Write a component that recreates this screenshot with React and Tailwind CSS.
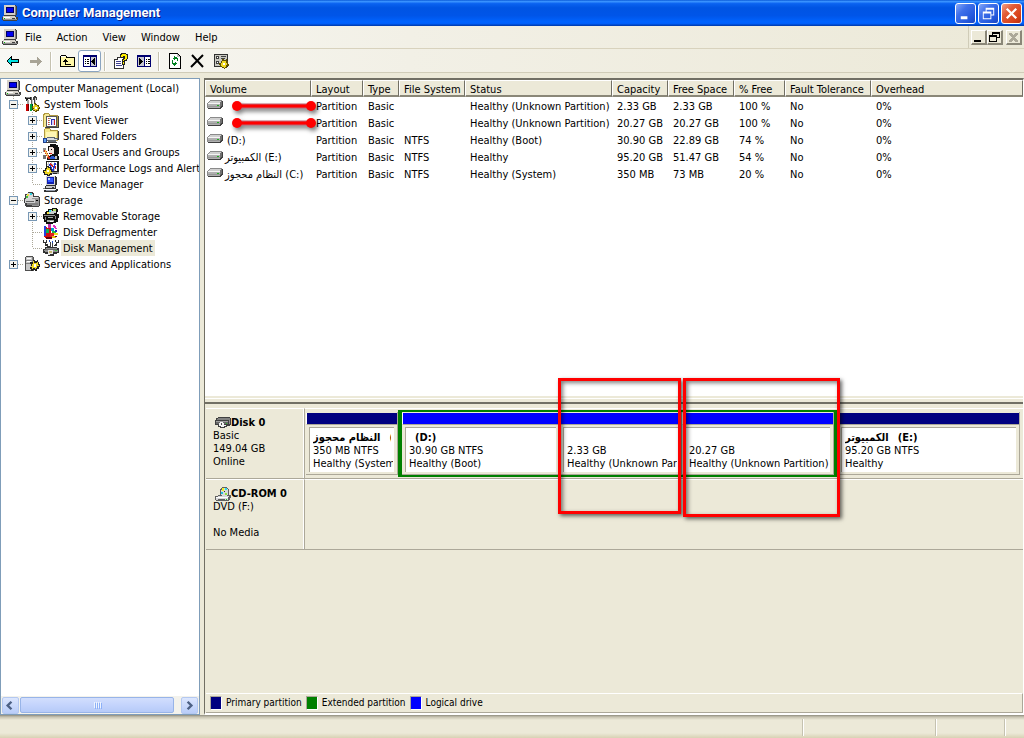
import { clsx } from "clsx";

const volumes = [
  { name: "", layout: "Partition", type: "Basic", fs: "", status: "Healthy (Unknown Partition)", capacity: "2.33 GB", free: "2.33 GB", pct: "100 %", marked: true },
  { name: "", layout: "Partition", type: "Basic", fs: "", status: "Healthy (Unknown Partition)", capacity: "20.27 GB", free: "20.27 GB", pct: "100 %", marked: true },
  { name: "", letter: "(D:)", layout: "Partition", type: "Basic", fs: "NTFS", status: "Healthy (Boot)", capacity: "30.90 GB", free: "22.89 GB", pct: "74 %" },
  { name: "الكمبيوتر", letter: "(E:)", layout: "Partition", type: "Basic", fs: "NTFS", status: "Healthy", capacity: "95.20 GB", free: "51.47 GB", pct: "54 %" },
  { name: "النظام محجوز", letter: "(C:)", layout: "Partition", type: "Basic", fs: "NTFS", status: "Healthy (System)", capacity: "350 MB", free: "73 MB", pct: "20 %" },
];

const columns = ["Volume", "Layout", "Type", "File System", "Status", "Capacity", "Free Space", "% Free", "Fault Tolerance", "Overhead"];

const tree = [
  { label: "Computer Management (Local)", depth: 0, icon: ComputerIcon },
  { label: "System Tools", depth: 1, box: "-", icon: ToolsIcon },
  { label: "Event Viewer", depth: 2, box: "+", icon: EventIcon },
  { label: "Shared Folders", depth: 2, box: "+", icon: SharedIcon },
  { label: "Local Users and Groups", depth: 2, box: "+", icon: UsersIcon },
  { label: "Performance Logs and Alerts", depth: 2, box: "+", icon: PerfIcon },
  { label: "Device Manager", depth: 2, icon: DeviceIcon, last: true },
  { label: "Storage", depth: 1, box: "-", icon: StorageIcon },
  { label: "Removable Storage", depth: 2, box: "+", icon: RemovableIcon },
  { label: "Disk Defragmenter", depth: 2, icon: DefragIcon },
  { label: "Disk Management", depth: 2, icon: DiskMgmtIcon, last: true, selected: true },
  { label: "Services and Applications", depth: 1, box: "+", icon: ServicesIcon, last: true },
];

function Icon({ children, w = 16, h = 16 }) {
  return (
    <svg width={w} height={h} viewBox={`0 0 ${w} ${h}`} shapeRendering="crispEdges" className="block shrink-0" aria-hidden="true">
      {children}
    </svg>
  );
}

function ComputerIcon() {
  return (
    <Icon>
      <path d="M2 0h12v1h1v9h-1v1H2z" fill="#404040" />
      <path d="M2 0h11v10H2z" fill="#d4d0c8" />
      <path d="M13 1h1v9h-1z" fill="#808080" />
      <path d="M4 2h8v6H4z" fill="#000060" />
      <path d="M5 3h6v4H5z" fill="#0000f0" />
      <path d="M1 11h13v1h2v3h-1v1H1v-1H0v-3h1z" fill="#404040" />
      <path d="M1 11h12v1H1zM1 12h13v2H1z" fill="#d4d0c8" />
      <path d="M1 14h14v1H1z" fill="#909090" />
      <path d="M2 12h6v1H2z" fill="#fff" />
      <path d="M10 13h3v1h-3z" fill="#404040" />
      <path d="M2 13h1v1H2z" fill="#00c000" />
    </Icon>
  );
}

function ToolsIcon() {
  return (
    <Icon>
      <path d="M1 1h6v1h1v2H6V3H4v2H2V3H1z" fill="#202020" />
      <path d="M2 1h4v1H2z" fill="#909090" />
      <path d="M3 4h2v6H3z" fill="#a0a0a0" />
      <path d="M7 1h1v8H7z" fill="#606060" />
      <path d="M8 3h1v6H8z" fill="#c8c8c8" />
      <path d="M10 0h2v1h1v3h-1v5h-2V4H9V1h1z" fill="#404040" />
      <path d="M11 2h1v6h-1z" fill="#d0d0d0" />
      <path d="M2 8h3v7H2z" fill="#d00000" />
      <path d="M4 8h1v7H4z" fill="#700000" />
      <path d="M6 8h2v7H6z" fill="#00a040" />
      <path d="M8 8h1v6H8z" fill="#004020" />
      <path d="M10 7h2v1h1v1h2v2h1v2h-1v2h-2v1h-2v-1H9v-2H8v-3h2z" fill="#605000" />
      <path d="M10 8h1v1h2v1h1v1h1v1h-1v2h-2v1h-1v-1H9v-1h1v-1H9v-2h1z" fill="#e8d020" />
      <path d="M11 11h2v2h-2z" fill="#fff" />
    </Icon>
  );
}

function EventIcon() {
  return (
    <Icon>
      <path d="M0 2h1V1h5v1h1v1h8v12H0z" fill="#b09840" />
      <path d="M1 3h1V2h4v2h8v11H1z" fill="#f4e894" />
      <path d="M15 4h1v12H2v-1h13z" fill="#404040" />
      <path d="M3 4h11v11H3z" fill="#585858" />
      <path d="M4 5h9v9H4z" fill="#fff" />
      <path d="M5 6h1v1H5zM5 8h1v1H5zM5 10h1v1H5zM5 12h1v1H5z" fill="#e04040" />
      <path d="M6 6h2v1H6zM6 8h1v1H6zM6 10h1v1H6zM6 12h1v1H6z" fill="#80a080" />
      <path d="M8 7h1v6H8zM9 7h3v1H9z" fill="#3030b0" />
      <path d="M9 8h2v5H9z" fill="#d0d0ff" />
      <path d="M11 8h1v5h-1z" fill="#d02020" />
    </Icon>
  );
}

function SharedIcon() {
  return (
    <Icon>
      <path d="M1 1h1V0h5v1h1v1h7v11H1z" fill="#b09840" />
      <path d="M2 1h5v2h7v8H2z" fill="#f4e88c" />
      <path d="M3 4h10v6H3z" fill="#fff6b4" />
      <path d="M15 3h1v9h-1z" fill="#404040" />
      <path d="M4 9h8v1h3v2h-2v2H5v-1H3v-2h1z" fill="#606870" />
      <path d="M4 10h7v1h3v1H4z" fill="#d8dce0" />
      <path d="M0 10h4v5H0z" fill="#204090" />
      <path d="M1 11h2v3H1z" fill="#60a0f0" />
      <path d="M3 14h11v1H3z" fill="#404040" />
    </Icon>
  );
}

function UsersIcon() {
  return (
    <Icon>
      <path d="M7 0h6v1h2v2h1v7h-1v2h1v4H4v-3h2v-1h1v-2H6V7H5V2h2z" fill="#101010" />
      <path d="M6 3h4v1h1v6H9v1H7V9H6z" fill="#f4e4dc" />
      <path d="M8 5h1v1H8z" fill="#000" />
      <path d="M7 9h2v1H7z" fill="#d02020" />
      <path d="M0 4h3v2H1v2H0z" fill="#909090" />
      <path d="M1 6h2v1h1v2h1v2h1v2h1v2H5v-1H4v-2H3v-2H2V8H1z" fill="#d03020" />
      <path d="M2 6h1v2h1v2h1v3H4v-2H3V9H2z" fill="#f4d060" />
      <path d="M0 11h3v4H0z" fill="#707070" />
      <path d="M8 12h3v1h1v2H7v-2h1z" fill="#2a58d0" />
      <path d="M12 12h2v3h-2z" fill="#c0c0c0" />
    </Icon>
  );
}

function PerfIcon() {
  return (
    <Icon>
      <path d="M3 1h13v11H3z" fill="#202020" />
      <path d="M4 2h10v9H4z" fill="#fff" />
      <path d="M5 2h1v9H5zM8 2h1v9H8zM11 2h1v9h-1zM4 4h10v1H4z" fill="#c8c8c8" />
      <path d="M4 6h2V4h2v3h1v2h1V6h1V3h2v2h-1v3h-1v3H9V9H8V7H7V6H6v2H4z" fill="#2030d0" />
      <path d="M7 3h1v1h1v1h1v2H9V6H8V5H7zM12 6h1v3h-1z" fill="#d02020" />
      <path d="M3 6h3v1h2v2h1v2h2v2H9v2H7v1H4v-1H1v-2H0v-3h2V8h1z" fill="#202020" />
      <path d="M4 7h1v1h2v2h1v2h1v1H7v1H6v1H5v-1H2v-2H1v-1h2V9h1z" fill="#f0d820" />
      <path d="M4 10h2v2H4z" fill="#fff" />
      <path d="M9 12h7v2H9z" fill="#909090" />
      <path d="M10 13h4v1h-4z" fill="#202020" />
    </Icon>
  );
}

function DeviceIcon() {
  return (
    <Icon>
      <path d="M3 0h10v1h1v8h-1v1H3z" fill="#303030" />
      <path d="M3 0h9v9H3z" fill="#d4d4d4" />
      <path d="M4 1h7v7H4z" fill="#1020b0" />
      <path d="M5 2h5v4H5z" fill="#3458ff" />
      <path d="M5 2h2v2H5z" fill="#c0d8ff" />
      <path d="M2 10h11v3h2v2h-1v1H1v-2h1z" fill="#303030" />
      <path d="M3 10h9v2H3z" fill="#c8c8c8" />
      <path d="M2 13h11v1H2z" fill="#fff" />
      <path d="M3 14h9v1H3z" fill="#9098a8" />
      <path d="M0 12h2v1H0z" fill="#808080" />
      <path d="M9 11h2v1H9z" fill="#404040" />
    </Icon>
  );
}

function StorageIcon() {
  return (
    <Icon>
      <path d="M4 0h5v1h1v3h5v1h1v9h-1v1H2v-1H1v-3H0V6h1V2h3z" fill="#404040" />
      <path d="M3 1h5v1h1v5H2V3h1z" fill="#d8d8d8" />
      <path d="M3 2h2v2H3z" fill="#f0e040" />
      <path d="M6 1h2v2H6z" fill="#30d0e0" />
      <path d="M2 4h2v2H2z" fill="#40c040" />
      <path d="M8 5h7v9H8z" fill="#989898" />
      <path d="M8 5h6v1H8z" fill="#e0e0e0" />
      <path d="M1 7h10v4H1z" fill="#d0d0d0" />
      <path d="M2 9h8v1H2z" fill="#606060" />
      <path d="M3 11h11v2H3z" fill="#808080" />
      <path d="M12 8h2v1h-2z" fill="#000" />
    </Icon>
  );
}

function RemovableIcon() {
  return (
    <Icon>
      <path d="M5 1h4V0h5v1h1v3h-1v2h2v4h-1v4h-2v1h-3v1H3v-2H1v-3H0V6h2V4h1V3h2z" fill="#101010" />
      <path d="M6 2h3v1h4v2h-2v1H4V4h2z" fill="#c8d0d0" />
      <path d="M6 2h2v2H6z" fill="#30e0e8" />
      <path d="M10 1h3v2h-3z" fill="#b8e060" />
      <path d="M4 4h2v2H4z" fill="#f0e040" />
      <path d="M1 7h11v1H1zM2 9h1v3H2zM12 8h1v3h-1z" fill="#909090" />
      <path d="M5 9h5v1H5zM4 12h7v2H4z" fill="#a8b0a8" />
      <path d="M7 13h3v1H7z" fill="#fff" />
    </Icon>
  );
}

function DefragIcon() {
  return (
    <Icon>
      <path d="M1 2l4 2 3-2v11l-3 2-4-2z" fill="#d01010" />
      <path d="M1 2h2v10H1z" fill="#2040e0" />
      <path d="M3 5h3v4H3z" fill="#10b050" />
      <path d="M5 0h3v4H5z" fill="#c030b0" />
      <path d="M8 4h3v3H8z" fill="#00a0d0" />
      <path d="M10 1h2v1h1v2h1v1h-2V4h-1V3h-1z" fill="#e030c0" />
      <path d="M9 7h4v4H9z" fill="#20c040" />
      <path d="M12 6h2v2h-2z" fill="#2020c0" />
      <path d="M7 9h4v4H7z" fill="#e02020" />
      <path d="M11 9h4v2h-4z" fill="#f0e020" />
      <path d="M9 12h4v2H9z" fill="#e8c010" />
      <path d="M3 13h6v2H3zM12 12h2v1h-2z" fill="#600010" />
    </Icon>
  );
}

function DiskMgmtIcon() {
  return (
    <Icon>
      <path d="M0 0h1v2h2V0h1v3H3v1h2v2h2v1H4V6H2V3H0zM15 0h1v3h-2v3h-3V5h1V4h1V2h-1V0h1v2h2z" fill="#303030" />
      <path d="M6 0h1v2H6zM9 1h1v2H9z" fill="#2050c0" />
      <path d="M7 2h1v5H7zM9 3h1v4H9z" fill="#404040" />
      <path d="M2 7h12v1h2v5h-2v1h-3v2H5v-2H2v-1H0V9h2z" fill="#303030" />
      <path d="M3 8h11v1H2v1h13v2H2v-1H1v-1h2z" fill="#909090" />
      <path d="M2 9h12v1H2z" fill="#686868" />
      <path d="M5 10h5v4H7v1H5z" fill="#e8e8e8" />
      <path d="M6 11h3v2H6z" fill="#c8b870" />
      <path d="M12 10h2v1h-2z" fill="#40c040" />
    </Icon>
  );
}

function ServicesIcon() {
  return (
    <Icon>
      <path d="M1 1h1V0h7v1h1v14H1z" fill="#505050" />
      <path d="M2 1h6v13H2z" fill="#c8c8c8" />
      <path d="M2 4h6v1H2zM2 7h6v1H2z" fill="#808080" />
      <path d="M8 1h1v13H8z" fill="#808080" />
      <path d="M3 2h4v1H3zM3 5h4v1H3z" fill="#fff" />
      <path d="M9 4h2v1h2V4h1v2h1v2h1v3h-1v2h-2v2h-2v-1H9v1H7v-2H6v-2h1V8H6V6h3z" fill="#202020" />
      <path d="M10 5v2h3V6h1v3h1v1h-2v2h-1v1h-1v-1H9v1H8v-2H7v-1h1V8h1V5z" fill="#f0d820" />
      <path d="M10 8h2v3h-2z" fill="#fff" />
    </Icon>
  );
}

function DriveIcon() {
  return (
    <Icon w={16} h={10}>
      <path d="M3 1h12v1h1v6h-1v1h-1v1H1V9H0V4h1V3h1V2h1z" fill="#8a8a8a" />
      <path d="M15 2h1v6h-1v1h-1v1H1V9h12V8h1V7h1z" fill="#404040" />
      <path d="M3 2h12v1H3zM2 3h12v1H2z" fill="#d0d0d0" />
      <path d="M1 4h12v5H1z" fill="#b0b0b0" />
      <path d="M1 4h12v1H1z" fill="#f4f4f4" />
      <path d="M1 7h12v1H1z" fill="#989898" />
      <path d="M13 3h1v5h-1zM14 2h1v5h-1z" fill="#707070" />
      <path d="M10 6h2v1h-2z" fill="#20b020" />
    </Icon>
  );
}

function HardDiskIcon() {
  return (
    <Icon w={16} h={12}>
      <path d="M3 0h12v1h1v7h-1v1h-3v1h-2v1H5v-1H3V8H0V3h1V1h2z" fill="#404040" />
      <path d="M3 1h12v2H2V2h1z" fill="#808080" />
      <path d="M1 4h12v3H1z" fill="#686868" />
      <path d="M1 4h12v1H1z" fill="#a0a0a0" />
      <path d="M5 5h3v1h1v2h2v1H9v1H6V9H4V6h1z" fill="#f4f4f4" />
      <path d="M6 6h1v2H6z" fill="#505050" />
      <path d="M11 6h1v1h-1z" fill="#20c020" />
      <path d="M14 3h1v4h-1z" fill="#909090" />
    </Icon>
  );
}

function CdDriveIcon() {
  return (
    <Icon w={16} h={14}>
      <path d="M7 0h5v1h1v1h1v6h2v3h-1v2h-1v1H1v-1H0V9h3V8h2V2h1V1h1z" fill="#606060" />
      <path d="M7 1h5v1h1v6h-1v1H7V8H6V3h1z" fill="#d8dcd8" />
      <path d="M7 1h2v3H7z" fill="#f0f020" />
      <path d="M10 1h2v2h-2z" fill="#30d8e8" />
      <path d="M6 5h2v2H6z" fill="#20c0e0" />
      <path d="M10 6h2v2h-2z" fill="#90e040" />
      <path d="M9 4h1v1H9z" fill="#303030" />
      <path d="M3 9h11v1H3zM1 10h12v3H1z" fill="#d8d8d8" />
      <path d="M1 10h12v1H1z" fill="#fff" />
      <path d="M3 12h7v1H3z" fill="#606060" />
      <path d="M11 12h1v1h-1z" fill="#20c020" />
    </Icon>
  );
}

function TitleBar() {
  return (
    <header className="flex h-[26px] shrink-0 items-center bg-[linear-gradient(#0a5ad8_0%,#3a93ff_6%,#0a62f0_14%,#0054e3_30%,#0055e8_60%,#0063ff_84%,#0060fc_90%,#0038a8_100%)] px-[2px]">
      <ComputerIcon />
      <h1 className="ml-[4px] flex-1 font-[Roboto,sans-serif] text-[13px] leading-[26px] font-bold text-white [text-shadow:1px_1px_#0a1883]">
        Computer Management
      </h1>
      <div className="flex gap-[2px]">
        <CaptionButton label="Minimize">
          <path d="M5 13h7v3H5z" fill="#fff" />
        </CaptionButton>
        <CaptionButton label="Restore">
          <path d="M7 4h9v8h-3v-1h2V6H8v2H7zM4 8h9v8H4zM5 10v5h7v-5z" fill="#fff" fillRule="evenodd" />
        </CaptionButton>
        <CaptionButton label="Close" danger>
          <path d="M5 5l10 10M15 5L5 15" stroke="#fff" strokeWidth="2.4" />
        </CaptionButton>
      </div>
    </header>
  );
}

function CaptionButton({ label, danger, children }) {
  return (
    <button
      aria-label={label}
      className={clsx(
        "size-[21px] overflow-hidden rounded-[3px] border border-white",
        danger
          ? "bg-[linear-gradient(135deg,#f0a088_0%,#e25b36_35%,#d8421a_75%,#b83010_100%)]"
          : "bg-[linear-gradient(135deg,#86a8f8_0%,#3f70ea_35%,#2458dc_75%,#1a46c0_100%)]",
      )}
    >
      <svg width="19" height="19" viewBox="0 0 20 20" aria-hidden="true">{children}</svg>
    </button>
  );
}

function MenuBar() {
  return (
    <nav className="flex h-[23px] shrink-0 items-stretch border-b border-[#d8d2bd] bg-[linear-gradient(90deg,#f8f8f4,#f2f0e6_40%,#ece9d8)] pl-[2px]">
      <div className="flex flex-1 items-center">
        <ComputerIcon />
        <ul className="ml-[7px] flex gap-[15px]">
          {["File", "Action", "View", "Window", "Help"].map((item) => (
            <li key={item}><button>{item}</button></li>
          ))}
        </ul>
      </div>
      <div className="flex items-center border-l border-[#d0ccb8] pr-[2px] pl-[2px]">
        <MdiButton label="Minimize window"><path d="M2 9h7v2H2z" fill="#000" /></MdiButton>
        <MdiButton label="Restore window">
          <path d="M4 1h8v6H9v4H1V4h3zM5 3v1h4v2h2V3zM2 6v4h6V6z" fill="#000" fillRule="evenodd" />
        </MdiButton>
        <span className="w-[3px]" />
        <MdiButton label="Close window">
          <path d="M2 2h3v1h1v1h1V3h1V2h3v2h-1v1H9v1H8v1h1v1h1v1h1v2H8v-1H7V9H6v1H5v1H2V9h1V8h1V7h1V6H4V5H3V4H2z" fill="#aca899" />
        </MdiButton>
      </div>
    </nav>
  );
}

function MdiButton({ label, children }) {
  return (
    <button aria-label={label} className="flex h-[15px] w-[16px] items-center justify-center border-t border-r-2 border-b-2 border-l border-t-white border-r-[#8a8778] border-b-[#8a8778] border-l-white bg-[#ece9d8]">
      <Icon w={13} h={12}>{children}</Icon>
    </button>
  );
}

function Separator() {
  return <span className="mx-[3px] h-[19px] w-[2px] border-r border-l border-r-white border-l-[#c5c2b0]" />;
}

function ToolButton({ label, active, children }) {
  return (
    <button
      aria-label={label}
      className={clsx(
        "flex h-[22px] w-[23px] items-center justify-center rounded-[3px] border",
        active ? "border-[#8aa4c0] bg-white" : "border-transparent",
      )}
    >
      <Icon>{children}</Icon>
    </button>
  );
}

function Toolbar() {
  return (
    <div className="flex h-[24px] shrink-0 items-center border-b border-[#d0ccb8] bg-[linear-gradient(90deg,#f8f8f4,#f2f0e6_40%,#ece9d8)] pt-px pl-[1px]">
      <ToolButton label="Back">
        <path d="M6 3h1v3h7v4H7v3H6v-1H5v-1H4v-1H3V9H2V7h1V6h1V5h1V4h1z" fill="#000" />
        <path d="M5 5h1v2h7v2H6v2H5v-1H4V9H3V7h1V6h1z" fill="#00e0e0" />
      </ToolButton>
      <ToolButton label="Forward">
        <path d="M9 4h1v1h1v1h1v1h1v1h1v1h-1v1h-1v1h-1v1h-1v1H9v-3H2V7h7z" fill="#a8a496" />
      </ToolButton>
      <Separator />
      <ToolButton label="Up">
        <path d="M1 3h1V2h5v1h1v1h8v10H1z" fill="#000" />
        <path d="M2 3h5v2h8v8H2z" fill="#fff8a8" />
        <path d="M2 3h4v1H2z" fill="#fff" />
        <path d="M6 6h1v1h1v1h1v1H7v2h5v1H6V9H4V8h1V7h1z" fill="#000" />
      </ToolButton>
      <ToolButton label="Show or hide console tree" active>
        <path d="M1 2h14v12H1z" fill="#000070" />
        <path d="M2 4h6v9H2z" fill="#fff" />
        <path d="M9 4h5v9H9z" fill="#c8c8d0" />
        <path d="M3 6h1v1H3zM5 6h2v1H5zM3 8h1v1H3zM5 8h2v1H5zM3 10h1v1H3zM5 10h2v1H5zM13 5v7h-1v-1h-1v-1h-1V9H9V8h1V7h1V6h1V5z" fill="#000" />
      </ToolButton>
      <Separator />
      <ToolButton label="Properties">
        <path d="M1 6h3V4h7v12H1z" fill="#303030" />
        <path d="M2 7h3V5h5v10H2z" fill="#fff" />
        <path d="M3 8h5v1H3zM3 10h5v1H3zM3 12h6v1H3z" fill="#404090" />
        <path d="M8 0h5v1h2v5h-1v2h-2v4H9V6h2V5H8V4H7V1h1z" fill="#202020" />
        <path d="M9 1h4v1h1v4h-1v1h-2v1h-1V7h1V6h1V3h-2v1H8V2h1zM10 9h1v2h-1z" fill="#ffee00" />
      </ToolButton>
      <ToolButton label="Show or hide action pane">
        <path d="M1 2h14v12H1z" fill="#000070" />
        <path d="M2 4h6v9H2z" fill="#c8c8d0" />
        <path d="M9 4h5v9H9z" fill="#fff" />
        <path d="M3 5h1v1h1v1h1v1h1v1H6v1H5v1H4v1H3zM10 6h1v1h-1zM12 6h2v1h-2zM10 8h1v1h-1zM12 8h2v1h-2zM10 10h1v1h-1zM12 10h2v1h-2z" fill="#000" />
      </ToolButton>
      <Separator />
      <ToolButton label="Refresh">
        <path d="M2 0h9v1h1v1h1v1h1v13H2z" fill="#000" />
        <path d="M3 1h7v3h3v11H3z" fill="#fff" />
        <path d="M10 1h1v1h1v1h1v1h-3z" fill="#c0c0c0" />
        <path d="M7 3h1v1h2v1h1v3h-1V6H8v1H7V6H6V5h1zM5 7h1v3h2V9h1v1h1v1H9v1H8v1H7v-1H6v-1H5z" fill="#008020" />
      </ToolButton>
      <ToolButton label="Delete">
        <path d="M2 2l11 12M13 2L1 14" stroke="#000" strokeWidth="2" shapeRendering="auto" />
      </ToolButton>
      <ToolButton label="Settings">
        <path d="M1 1h14v13H1z" fill="#303030" />
        <path d="M2 2h12v11H2z" fill="#c8c8c0" />
        <path d="M3 3h3v3H3zM3 8h3v3H3zM8 3h5v1H8zM8 5h4v1H8z" fill="#404040" />
        <path d="M4 4h1v1H4zM4 9h1v1H4z" fill="#fff" />
        <path d="M9 6h2v1h2V6h1v2h1v3h1v2h-2v2h-2v1h-1v-1H9v-1H7v-2H6v-2h2V8h1z" fill="#605000" />
        <path d="M10 7v1h3v2h1v2h-1v2h-1v1h-1v-1H9v-1H8v-3h1V8z" fill="#f0d820" />
        <path d="M10 10h2v2h-2z" fill="#fff" />
      </ToolButton>
    </div>
  );
}

function Branch({ box, last, elbow }) {
  const lines = (
    <svg width="19" height="16" viewBox="0 0 19 16" shapeRendering="crispEdges" className="block shrink-0" aria-hidden="true">
      <path d={last ? "M9.5 0v8" : "M9.5 0v16"} stroke="#aca899" strokeDasharray="1 1" />
      {elbow && <path d="M10 8.5h9" stroke="#aca899" strokeDasharray="1 1" />}
      {box && (
        <>
          <rect x="5.5" y="4.5" width="8" height="8" rx="1" fill="#f4f3ee" stroke="#7898b5" />
          <path d="M7 8h5v1H7z" fill="#000" />
          {box === "+" && <path d="M9 6h1v5H9z" fill="#000" />}
        </>
      )}
    </svg>
  );
  return box ? <button aria-label={box === "+" ? "Expand" : "Collapse"}>{lines}</button> : lines;
}

function ConsoleTree() {
  return (
    <aside className="flex w-[200px] shrink-0 flex-col border border-[#7f9db9] bg-white">
      <ul className="min-h-0 flex-1 overflow-hidden pt-px pl-[3px]">
        {tree.map((node) => {
          const NodeIcon = node.icon;
          return (
            <li key={node.label} className="flex h-[16px] items-center whitespace-nowrap">
              {node.depth === 2 && <Branch />}
              {node.depth > 0 && <Branch box={node.box} last={node.last} elbow />}
              <span className="mx-px"><NodeIcon /></span>
              <span className={clsx("ml-px px-[2px] pt-[2px] leading-[14px]", node.selected && "bg-[#ece9d8]")}>{node.label}</span>
            </li>
          );
        })}
      </ul>
      <div className="flex h-[18px] items-center gap-px bg-[#f3f2ec] px-px">
        <ScrollButton label="Scroll left" d="M9 4L5 8l4 4" />
        <div className="flex flex-1">
          <div className="flex h-[16px] w-[154px] items-center justify-center gap-px rounded-[2px] border border-[#98b4e8] bg-[linear-gradient(#d2defd,#c4d4fc_50%,#b6caf8)]">
            {[0, 1, 2, 3].map((n) => <span key={n} className="h-[6px] w-px bg-[#eef4fe] shadow-[1px_1px_#8cb0f8]" />)}
          </div>
        </div>
        <ScrollButton label="Scroll right" d="M6 4l4 4-4 4" />
      </div>
    </aside>
  );
}

function ScrollButton({ label, d }) {
  return (
    <button aria-label={label} className="size-[17px] rounded-[2px] border border-[#b4c8f0] bg-[linear-gradient(#dce6fe,#b9cdf9)]">
      <svg width="15" height="15" viewBox="0 0 16 16" fill="none" stroke="#4d6185" strokeWidth="2.6" aria-hidden="true"><path d={d} /></svg>
    </button>
  );
}

function Marker() {
  return (
    <svg width="88" height="18" viewBox="0 0 88 18" className="pointer-events-none absolute top-0 left-[27px] z-10 drop-shadow-[2px_3px_2px_rgba(0,0,0,0.5)]" aria-hidden="true">
      <path d="M5 9h74" stroke="#c06070" strokeWidth="5" />
      <path d="M5 9h74" stroke="#f00" strokeWidth="3" />
      <circle cx="5" cy="9" r="5" fill="#f00" />
      <circle cx="79" cy="9" r="5" fill="#f00" />
    </svg>
  );
}

function VolumeList() {
  return (
    <section className="h-[316px] shrink-0 bg-white">
      <table className="w-full table-fixed border-collapse text-left">
        <colgroup>
          <col className="w-[106px]" />
          <col className="w-[52px]" />
          <col className="w-[36px]" />
          <col className="w-[66px]" />
          <col className="w-[147px]" />
          <col className="w-[56px]" />
          <col className="w-[66px]" />
          <col className="w-[51px]" />
          <col className="w-[86px]" />
          <col />
        </colgroup>
        <thead>
          <tr className="h-[17px]">
            {columns.map((c) => (
              <th key={c} className="p-0 font-normal">
                <div className="h-[17px] overflow-hidden border-t border-r border-b-2 border-l border-t-white border-r-[#716f64] border-b-[#8a8778] border-l-white bg-[#ece9d8] pl-[4px] leading-[17px] whitespace-nowrap">{c}</div>
              </th>
            ))}
          </tr>
        </thead>
        <tbody>
          {volumes.map((v, i) => (
            <tr key={i} className="h-[17px] leading-[15px] whitespace-nowrap [&>td]:pt-[2px] [&>td]:pr-0 [&>td]:pb-0 [&>td]:pl-[5px]">
              <td className="relative">
                <div className="-ml-[3px] flex h-[15px] items-start gap-[2px]">
                  <DriveIcon />
                  {v.name ? <span><bdi>{v.name}</bdi> {v.letter}</span> : <span className="pl-[2px]">{v.letter}</span>}
                </div>
                {v.marked && <Marker />}
              </td>
              <td>{v.layout}</td>
              <td>{v.type}</td>
              <td>{v.fs}</td>
              <td>{v.status}</td>
              <td>{v.capacity}</td>
              <td>{v.free}</td>
              <td>{v.pct}</td>
              <td>No</td>
              <td>0%</td>
            </tr>
          ))}
        </tbody>
      </table>
    </section>
  );
}

function Partition({ name, letter, size, status, logical, highlight }) {
  return (
    <div className="relative flex min-w-0 flex-col border-r border-b border-[#aca899] pt-px">
      <div className={clsx("h-[12px] shrink-0 border-b border-l border-b-[#aca899] border-l-white", logical ? "bg-[#0000ff]" : "bg-[#000080]")} />
      <div className="mx-[3px] my-[2px] flex-1 overflow-hidden border-t border-l border-[#aca899] bg-white pt-[3px] pl-[3px] leading-[13px] whitespace-nowrap">
        <p className="mr-[3px] h-[13px] overflow-hidden font-bold">
          {name && <bdi className="pr-[3px]">{name}</bdi>}
          {letter && <span className="pl-[6px]">{letter}</span>}
        </p>
        <p>{size}</p>
        <p className="mr-px overflow-hidden">{status}</p>
      </div>
      {highlight && <span className={clsx("pointer-events-none absolute z-10 border-[3px] border-[#ff0000] shadow-[2px_2px_4px_rgba(0,0,0,0.6),inset_2px_2px_4px_rgba(0,0,0,0.5)]", highlight)} />}
    </div>
  );
}

function DiskLabel({ icon, name, children }) {
  return (
    <div className="w-[98px] shrink-0 border-t border-r border-t-white border-r-white pt-[7px] pl-[7px] leading-[13px]">
      <h2 className="flex h-[13px] items-center pl-[2px] font-bold">{icon}<span className="whitespace-nowrap">{name}</span></h2>
      {children}
    </div>
  );
}

function DiskMap() {
  return (
    <section className="flex min-h-0 flex-1 flex-col bg-[#ece9d8] pt-[4px] pl-px">
      <div className="flex h-[71px] border-b border-[#aca899]">
        <DiskLabel icon={<HardDiskIcon />} name="Disk 0">
          <p>Basic</p>
          <p>149.04 GB</p>
          <p>Online</p>
        </DiskLabel>
        <div className="grid flex-1 grid-cols-[92fr_440fr_182fr] border-t border-l border-t-white border-l-[#aca899] pt-px pr-[3px] pb-px pl-px">
          <div className="grid py-[2px]"><Partition name="النظام محجوز" letter="(C:)" size="350 MB NTFS" status="Healthy (System)" /></div>
          <div className="grid grid-cols-[158fr_122fr_152fr] border-x-4 border-y-2 border-[#008000]">
            <Partition letter="(D:)" size="30.90 GB NTFS" status="Healthy (Boot)" logical />
            <Partition size="2.33 GB" status="Healthy (Unknown Partition)" logical highlight="-top-[34px] -bottom-[40px] -left-[2px] right-0" />
            <Partition size="20.27 GB" status="Healthy (Unknown Partition)" logical highlight="-top-[34px] -bottom-[43px] left-px -right-[7px]" />
          </div>
          <div className="grid py-[2px]"><Partition name="الكمبيوتر" letter="(E:)" size="95.20 GB NTFS" status="Healthy" /></div>
        </div>
      </div>
      <div className="flex h-[71px] border-b border-[#aca899]">
        <DiskLabel icon={<CdDriveIcon />} name="CD-ROM 0">
          <p>DVD (F:)</p>
          <p className="mt-[13px]">No Media</p>
        </DiskLabel>
        <div className="flex-1 border-t border-l border-t-white border-l-[#aca899]" />
      </div>
      <ul className="mt-auto flex h-[20px] items-center gap-[4px] border-t border-r border-b border-t-white border-r-[#aca899] border-b-[#aca899] pb-px pl-[4px] text-[10px]">
        <Legend color="bg-[#000080]">Primary partition</Legend>
        <Legend color="bg-[#008000]">Extended partition</Legend>
        <Legend color="bg-[#0000ff]">Logical drive</Legend>
      </ul>
    </section>
  );
}

function Legend({ color, children }) {
  return (
    <li className="flex items-center gap-[4px]">
      <span className={clsx("h-[14px] w-[12px] border border-t-[#aca899] border-r-white border-b-white border-l-[#aca899]", color)} />
      {children}
    </li>
  );
}

export default function App() {
  return (
    <div className="flex h-screen flex-col bg-[#ece9d8] font-['DejaVu_Sans_Condensed','DejaVu_Sans',sans-serif] text-[11px] leading-[13px] text-black select-none">
      <TitleBar />
      <MenuBar />
      <Toolbar />
      <main className="mt-[5px] flex min-h-0 flex-1 gap-[4px]">
        <ConsoleTree />
        <div className="flex min-w-0 flex-1 flex-col border-t-2 border-r border-b-2 border-l border-t-[#716f64] border-r-white border-b-white border-l-[#716f64]">
          <VolumeList />
          <div className="h-[8px] shrink-0 cursor-row-resize border-t-2 border-b-2 border-t-[#ece9d8] border-b-[#716f64] bg-[#ece9d8]"><div className="h-px bg-white" /></div>
          <DiskMap />
        </div>
      </main>
      <footer className="flex h-[23px] shrink-0 bg-[linear-gradient(#8f8c7e_0px,#c8c4b2_2px,#ece9d8_5px,#ece9d8_18px,#d8d2b4_100%)] pt-[4px] pb-[2px]">
        <span className="flex-1" />
        <span className="w-[133px] border-l border-[#c5c2b0] shadow-[inset_1px_0_#fff]" />
        <span className="w-[69px] border-l border-[#c5c2b0] shadow-[inset_1px_0_#fff]" />
        <span className="w-[20px] border-l border-[#c5c2b0] shadow-[inset_1px_0_#fff]" />
      </footer>
    </div>
  );
}
